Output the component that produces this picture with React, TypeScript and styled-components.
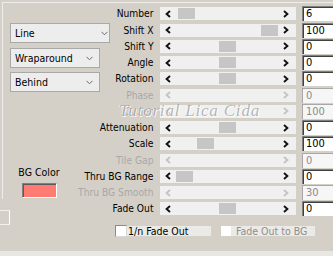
import React from "react";
import styled, { createGlobalStyle } from "styled-components";

const GlobalStyle = createGlobalStyle`
  html, body { margin: 0; padding: 0; background: #d4d0c8; }
  body { font-family: "DejaVu Sans Condensed", "Liberation Sans", Arial, sans-serif; font-size: 10px; color: #000; }
`;

const Window = styled.div`
  position: relative;
  width: 333px;
  height: 256px;
  overflow: hidden;
  background: #d4d0c8;
  display: flex;
  flex-direction: column;
  padding-top: 2px;
  box-sizing: border-box;
`;

const Panel = styled.div`
  position: relative;
  margin-left: 2px;
  border-top: 1px solid #efede9;
  padding-top: 2.75px;
  &::before {
    content: "";
    position: absolute;
    left: 0;
    top: 0;
    width: 1px;
    height: 196px;
    background: #efede9;
  }
`;

const ControlGrid = styled.div`
  display: grid;
  grid-template-columns: 151.5px 136.5px 40px;
  grid-template-rows: repeat(13, 16.25px);
  column-gap: 6px;
`;

const LeftStack = styled.div`
  grid-column: 1;
  grid-row: 1 / span 13;
  align-self: start;
  display: flex;
  flex-direction: column;
  align-items: flex-start;
  padding-top: 17.25px;
`;

const Select = styled.div<{ $w: number; $gap: number; $pr: number }>`
  width: ${(p) => p.$w}px;
  height: 20px;
  box-sizing: border-box;
  margin: ${(p) => p.$gap}px 0 0 8px;
  border: 1px solid #a9a9a9;
  background: #ededed;
  display: flex;
  align-items: center;
  justify-content: space-between;
  padding: 0 ${(p) => p.$pr}px 0 4px;
  font-size: 10.5px;
  color: #000;
`;

const ColorGroup = styled.div`
  margin: 74px 0 0 13px;
  width: 48px;
  display: flex;
  flex-direction: column;
  align-items: center;
  gap: 4px;
`;

const ColorLabel = styled.span`
  font-size: 10.5px;
  line-height: 13px;
  white-space: nowrap;
`;

const Swatch = styled.div<{ $color: string }>`
  width: 35px;
  height: 15px;
  box-sizing: border-box;
  background: ${(p) => p.$color};
  border-top: 1px solid #808080;
  border-left: 1px solid #808080;
  border-right: 1px solid #ffffff;
  border-bottom: 1px solid #ffffff;
  box-shadow: inset 1px 1px 0 #5a5a5a;
`;

const EdgeStub = styled.div`
  margin: 12px 0 0 -2px;
  width: 10px;
  height: 15px;
  box-sizing: border-box;
  border-top: 1px solid #f2f1ee;
  border-right: 1px solid #ffffff;
  border-bottom: 1px solid #f2f1ee;
`;

const Label = styled.div<{ $row: number; $disabled?: boolean }>`
  grid-column: 1;
  grid-row: ${(p) => p.$row};
  display: flex;
  justify-content: flex-end;
  align-items: center;
  white-space: nowrap;
  font-size: 10.2px;
  color: ${(p) => (p.$disabled ? "#a8a8a8" : "#000")};
`;

const Track = styled.div<{ $row: number }>`
  grid-column: 2;
  grid-row: ${(p) => p.$row};
  align-self: center;
  height: 13px;
  background: #f0f0f0;
  display: flex;
  align-items: stretch;
`;

const ArrowBox = styled.div<{ $side: "left" | "right" }>`
  width: 16px;
  display: flex;
  align-items: center;
  justify-content: ${(p) => (p.$side === "left" ? "center" : "flex-start")};
  padding-left: ${(p) => (p.$side === "left" ? 0 : 3)}px;
  box-sizing: border-box;
`;

const ThumbArea = styled.div`
  position: relative;
  flex: 1;
`;

const Thumb = styled.div`
  position: absolute;
  top: 1px;
  bottom: 1px;
  width: 17px;
  background: #c6c6c6;
`;

const ValueBox = styled.div<{ $row: number; $disabled?: boolean }>`
  grid-column: 3;
  grid-row: ${(p) => p.$row};
  align-self: center;
  height: 15px;
  box-sizing: border-box;
  background: ${(p) => (p.$disabled ? "#f6f6f6" : "#ffffff")};
  border-top: 1px solid ${(p) => (p.$disabled ? "#a8a8a8" : "#808080")};
  border-left: 1px solid ${(p) => (p.$disabled ? "#a8a8a8" : "#808080")};
  box-shadow: ${(p) => (p.$disabled ? "none" : "inset 1px 1px 0 #404040")};
  padding-left: 3px;
  font-size: 11px;
  line-height: 13px;
  color: ${(p) => (p.$disabled ? "#8c8c8c" : "#000")};
`;

const CheckRow = styled.div`
  display: flex;
  align-items: center;
  margin-top: 8px;
  padding-left: 113px;
`;

const CheckItem = styled.div`
  display: flex;
  align-items: center;
  & + & {
    margin-left: 10px;
  }
`;

const CheckBox = styled.div<{ $disabled?: boolean }>`
  width: ${(p) => (p.$disabled ? 10 : 12)}px;
  height: ${(p) => (p.$disabled ? 10 : 12)}px;
  box-sizing: border-box;
  background: #ffffff;
  border: ${(p) => (p.$disabled ? "none" : "1px solid #8a8a8a")};
  border-right-color: #d8d8d8;
  border-bottom-color: #d8d8d8;
`;

const CheckLabel = styled.span<{ $disabled?: boolean }>`
  width: 84px;
  height: 10px;
  line-height: 10px;
  background: #ebeae7;
  padding-left: ${(p) => (p.$disabled ? 5 : 1)}px;
  box-sizing: border-box;
  font-size: 10.5px;
  white-space: nowrap;
  color: ${(p) => (p.$disabled ? "#8e8e8e" : "#000")};
`;

const Watermark = styled.div`
  position: absolute;
  left: 117px;
  top: 98px;
  font-family: "Liberation Serif", "DejaVu Serif", serif;
  font-style: italic;
  font-size: 17px;
  letter-spacing: 0.8px;
  color: rgba(150, 150, 150, 0.7);
  text-shadow: 1px 1px 0 rgba(255, 255, 255, 0.9), -1px 0 0 rgba(255, 255, 255, 0.6);
  white-space: nowrap;
  pointer-events: none;
`;

const Footer = styled.div`
  margin-top: auto;
  height: 5px;
  background: #e9e7e2;
`;

const Chevron = () => (
  <svg width="7" height="5" viewBox="0 0 7 5">
    <polyline points="0.5,0.8 3.5,3.8 6.5,0.8" fill="none" stroke="#6a6a6a" strokeWidth="1" />
  </svg>
);

const Arrow = ({ dir, disabled }: { dir: "left" | "right"; disabled?: boolean }) => (
  <svg width="6" height="8" viewBox="0 0 6 8">
    <polyline
      points={dir === "left" ? "5,1 1.6,4 5,7" : "1,1 4.4,4 1,7"}
      fill="none"
      stroke={disabled ? "#c4c4c4" : "#111"}
      strokeWidth="1.9"
    />
  </svg>
);

type Row = { label: string; value: string; pos?: number; disabled?: boolean };

const rows: Row[] = [
  { label: "Number", value: "6", pos: 0.023 },
  { label: "Shift X", value: "100", pos: 0.977 },
  { label: "Shift Y", value: "0", pos: 0.494 },
  { label: "Angle", value: "0", pos: 0.494 },
  { label: "Rotation", value: "0", pos: 0.494 },
  { label: "Phase", value: "0", disabled: true },
  { label: "Cycles", value: "100", disabled: true },
  { label: "Attenuation", value: "0", pos: 0.494 },
  { label: "Scale", value: "100", pos: 0.25 },
  { label: "Tile Gap", value: "0", disabled: true },
  { label: "Thru BG Range", value: "0", pos: 0.01 },
  { label: "Thru BG Smooth", value: "30", disabled: true },
  { label: "Fade Out", value: "0", pos: 0.494 },
];

export default function App() {
  return (
    <>
      <GlobalStyle />
      <Window>
        <Panel>
          <ControlGrid>
            <LeftStack>
              <Select $w={100} $gap={0} $pr={1}>
                <span>Line</span>
                <Chevron />
              </Select>
              <Select $w={90} $gap={5} $pr={6}>
                <span>Wraparound</span>
                <Chevron />
              </Select>
              <Select $w={90} $gap={4} $pr={6}>
                <span>Behind</span>
                <Chevron />
              </Select>
              <ColorGroup>
                <ColorLabel>BG Color</ColorLabel>
                <Swatch $color="#ff7b73" />
              </ColorGroup>
              <EdgeStub />
            </LeftStack>
            {rows.map((r, i) => (
              <React.Fragment key={r.label}>
                <Label $row={i + 1} $disabled={r.disabled}>
                  {r.label}
                </Label>
                <Track $row={i + 1}>
                  <ArrowBox $side="left">
                    <Arrow dir="left" disabled={r.disabled} />
                  </ArrowBox>
                  <ThumbArea>
                    {r.pos !== undefined && (
                      <Thumb style={{ left: `calc((100% - 17px) * ${r.pos})` }} />
                    )}
                  </ThumbArea>
                  <ArrowBox $side="right">
                    <Arrow dir="right" disabled={r.disabled} />
                  </ArrowBox>
                </Track>
                <ValueBox $row={i + 1} $disabled={r.disabled}>
                  {r.value}
                </ValueBox>
              </React.Fragment>
            ))}
          </ControlGrid>
          <CheckRow>
            <CheckItem>
              <CheckBox />
              <CheckLabel>1/n Fade Out</CheckLabel>
            </CheckItem>
            <CheckItem>
              <CheckBox $disabled />
              <CheckLabel $disabled>Fade Out to BG</CheckLabel>
            </CheckItem>
          </CheckRow>
          <Watermark>Tutorial Lica Cida</Watermark>
        </Panel>
        <Footer />
      </Window>
    </>
  );
}
